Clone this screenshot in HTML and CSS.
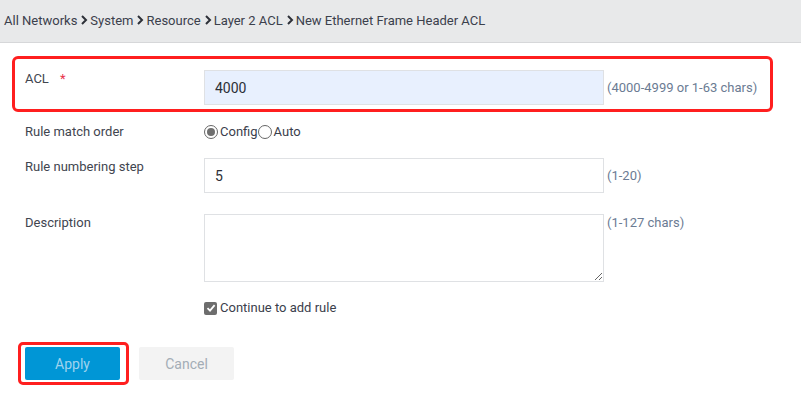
FILE: index.html
```html
<!DOCTYPE html>
<html lang="en">
<head>
    <meta charset="UTF-8">
    <title>New Ethernet Frame Header ACL</title>
    <link rel="stylesheet" href="styles.css">
</head>
<body>
    <div class="crumbs">
        <span>All Networks</span>
        <svg class="sep" width="8" height="10" viewBox="0 0 8 10"><path d="M2 1 L6 5 L2 9" fill="none" stroke="#2d3038" stroke-width="2"/></svg>
        <span>System</span>
        <svg class="sep" width="8" height="10" viewBox="0 0 8 10"><path d="M2 1 L6 5 L2 9" fill="none" stroke="#2d3038" stroke-width="2"/></svg>
        <span>Resource</span>
        <svg class="sep" width="8" height="10" viewBox="0 0 8 10"><path d="M2 1 L6 5 L2 9" fill="none" stroke="#2d3038" stroke-width="2"/></svg>
        <span>Layer 2 ACL</span>
        <svg class="sep" width="8" height="10" viewBox="0 0 8 10"><path d="M2 1 L6 5 L2 9" fill="none" stroke="#2d3038" stroke-width="2"/></svg>
        <span>New Ethernet Frame Header ACL</span>
    </div>

    <form class="form">
        <div class="row mark">
            <div class="label">ACL <span class="req">*</span></div>
            <input class="text filled" type="text" value="4000">
            <div class="hint mid">(4000-4999 or 1-63 chars)</div>
        </div>

        <div class="row radios">
            <div class="label">Rule match order</div>
            <label class="opt"><span class="radio on"></span>Config</label>
            <label class="opt"><span class="radio"></span>Auto</label>
        </div>

        <div class="row step">
            <div class="label">Rule numbering step</div>
            <input class="text" type="text" value="5">
            <div class="hint mid">(1-20)</div>
        </div>

        <div class="row desc">
            <div class="label">Description</div>
            <textarea class="area"></textarea>
            <div class="hint">(1-127 chars)</div>
        </div>

        <div class="row check">
            <div class="label"></div>
            <label class="opt"><span class="box"><svg width="10" height="10" viewBox="0 0 10 10"><path d="M1.5 5.2 L4 7.6 L8.6 2.2" fill="none" stroke="#fff" stroke-width="1.8"/></svg></span>Continue to add rule</label>
        </div>

        <div class="buttons">
            <span class="mark-btn"><button type="button" class="btn apply">Apply</button></span>
            <button type="button" class="btn cancel">Cancel</button>
        </div>
    </form>
</body>
</html>
```

FILE: styles.css
```css
body {
    margin: 0;
    font-family: Roboto, "Liberation Sans", sans-serif;
    font-size: 13px;
    color: #41454f;
    background: #fff;
}

.crumbs {
    height: 43px;
    box-sizing: border-box;
    padding: 0 0 2px 4px;
    display: flex;
    align-items: center;
    background: #e8e9ea;
    border-bottom: 1px solid #d6d7d9;
    color: #3b404c;
    white-space: nowrap;
}

.sep {
    margin: 0 2px 0 3px;
}

.form {
    padding-top: 13px;
}

.row {
    display: flex;
    align-items: flex-start;
    padding-left: 25px;
}

.label {
    width: 179px;
    flex: none;
    line-height: 16px;
    padding-top: 1px;
}

.req {
    color: #e8334a;
    margin-left: 8px;
}

.row.mark {
    margin-left: 12px;
    width: 761px;
    box-sizing: border-box;
    border: 3px solid #ff1f1f;
    border-radius: 6px;
    padding: 11px 0 4px 10px;
}

.text {
    width: 400px;
    height: 35px;
    box-sizing: border-box;
    border: 1px solid #dfe1e4;
    padding: 0 10px;
    font: inherit;
    font-size: 14px;
    color: #2c2f36;
    outline: none;
    background: #fff;
}

.text.filled {
    background: #e8f0fe;
}

.hint {
    margin-left: 3px;
    line-height: 16px;
    color: #6b7b93;
    white-space: nowrap;
}

.hint.mid {
    align-self: center;
}

.radios {
    margin-top: 10px;
    height: 20px;
    align-items: center;
}

.radios .label {
    padding-top: 0;
}

.opt {
    display: flex;
    align-items: center;
    line-height: 16px;
    color: #3b404c;
}

.radio {
    width: 12px;
    height: 12px;
    border: 1px solid #666;
    border-radius: 50%;
    margin-right: 2px;
    box-sizing: content-box;
    position: relative;
}

.radio.on::after {
    content: "";
    position: absolute;
    left: 2px;
    top: 2px;
    width: 8px;
    height: 8px;
    border-radius: 50%;
    background: #6f6f6f;
}

.step {
    margin-top: 16px;
}

.desc {
    margin-top: 21px;
}

.area {
    width: 400px;
    height: 68px;
    box-sizing: border-box;
    border: 1px solid #dfe1e4;
    resize: both;
    outline: none;
    margin: 0;
    font: inherit;
}

.desc .hint {
    margin-top: 1px;
}

.check {
    margin-top: 16px;
    height: 20px;
    align-items: center;
}

.box {
    width: 13px;
    height: 13px;
    border-radius: 2px;
    background: #6d6d6d;
    margin-right: 3px;
    display: flex;
    align-items: center;
    justify-content: center;
}

.buttons {
    display: flex;
    align-items: center;
    padding-left: 18px;
    margin-top: 24px;
}

.mark-btn {
    display: inline-flex;
    border: 3px solid #ff1f1f;
    border-radius: 5px;
    padding: 2px 6px 2px 4px;
    margin-right: 10px;
}

.btn {
    width: 95px;
    height: 33px;
    border: none;
    border-radius: 2px;
    font: inherit;
    font-size: 14px;
    padding: 0;
}

.apply {
    background: #0096d6;
    color: #9fd3ee;
}

.cancel {
    background: #f3f3f3;
    color: #a3adb6;
}
```
